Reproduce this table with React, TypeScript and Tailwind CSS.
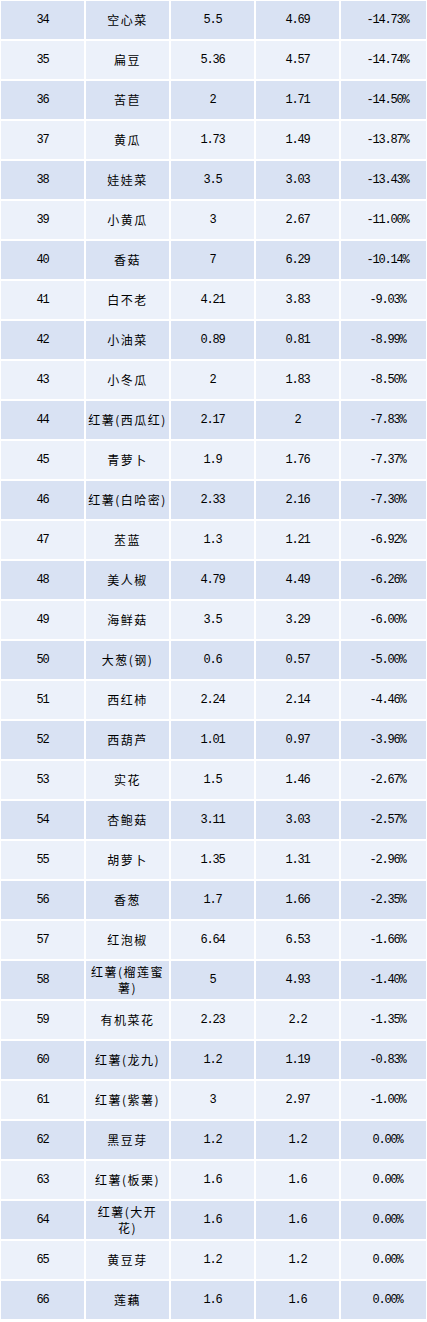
type Row = {
  no: number;
  name: React.ReactNode;
  before: string;
  after: string;
  change: string;
};

const rows: Row[] = [
  { no: 34, name: '空心菜', before: '5.5', after: '4.69', change: '-14.73%' },
  { no: 35, name: '扁豆', before: '5.36', after: '4.57', change: '-14.74%' },
  { no: 36, name: '苦苣', before: '2', after: '1.71', change: '-14.50%' },
  { no: 37, name: '黄瓜', before: '1.73', after: '1.49', change: '-13.87%' },
  { no: 38, name: '娃娃菜', before: '3.5', after: '3.03', change: '-13.43%' },
  { no: 39, name: '小黄瓜', before: '3', after: '2.67', change: '-11.00%' },
  { no: 40, name: '香菇', before: '7', after: '6.29', change: '-10.14%' },
  { no: 41, name: '白不老', before: '4.21', after: '3.83', change: '-9.03%' },
  { no: 42, name: '小油菜', before: '0.89', after: '0.81', change: '-8.99%' },
  { no: 43, name: '小冬瓜', before: '2', after: '1.83', change: '-8.50%' },
  { no: 44, name: '红薯(西瓜红)', before: '2.17', after: '2', change: '-7.83%' },
  { no: 45, name: '青萝卜', before: '1.9', after: '1.76', change: '-7.37%' },
  { no: 46, name: '红薯(白哈密)', before: '2.33', after: '2.16', change: '-7.30%' },
  { no: 47, name: '苤蓝', before: '1.3', after: '1.21', change: '-6.92%' },
  { no: 48, name: '美人椒', before: '4.79', after: '4.49', change: '-6.26%' },
  { no: 49, name: '海鲜菇', before: '3.5', after: '3.29', change: '-6.00%' },
  { no: 50, name: '大葱(钢)', before: '0.6', after: '0.57', change: '-5.00%' },
  { no: 51, name: '西红柿', before: '2.24', after: '2.14', change: '-4.46%' },
  { no: 52, name: '西葫芦', before: '1.01', after: '0.97', change: '-3.96%' },
  { no: 53, name: '实花', before: '1.5', after: '1.46', change: '-2.67%' },
  { no: 54, name: '杏鲍菇', before: '3.11', after: '3.03', change: '-2.57%' },
  { no: 55, name: '胡萝卜', before: '1.35', after: '1.31', change: '-2.96%' },
  { no: 56, name: '香葱', before: '1.7', after: '1.66', change: '-2.35%' },
  { no: 57, name: '红泡椒', before: '6.64', after: '6.53', change: '-1.66%' },
  {
    no: 58,
    name: (
      <>
        红薯(榴莲蜜
        <br />
        薯)
      </>
    ),
    before: '5',
    after: '4.93',
    change: '-1.40%',
  },
  { no: 59, name: '有机菜花', before: '2.23', after: '2.2', change: '-1.35%' },
  { no: 60, name: '红薯(龙九)', before: '1.2', after: '1.19', change: '-0.83%' },
  { no: 61, name: '红薯(紫薯)', before: '3', after: '2.97', change: '-1.00%' },
  { no: 62, name: '黑豆芽', before: '1.2', after: '1.2', change: '0.00%' },
  { no: 63, name: '红薯(板栗)', before: '1.6', after: '1.6', change: '0.00%' },
  {
    no: 64,
    name: (
      <>
        红薯(大开
        <br />
        花)
      </>
    ),
    before: '1.6',
    after: '1.6',
    change: '0.00%',
  },
  { no: 65, name: '黄豆芽', before: '1.2', after: '1.2', change: '0.00%' },
  { no: 66, name: '莲藕', before: '1.6', after: '1.6', change: '0.00%' },
];

const numCell =
  "flex items-center justify-center font-['Liberation_Mono','Noto_Sans_CJK_SC',monospace] text-[12px] tracking-[-1.2px] text-black";
const nameCell =
  "flex items-center justify-center text-center font-['Noto_Sans_CJK_SC',sans-serif] text-[12px] leading-[16px] tracking-[1.5px] text-black";

export default function App() {
  return (
    <div className="flex w-[427px] flex-col gap-[2px] bg-white pb-[3px] pl-[1px] pr-[1px] pt-[1px]">
      {rows.map((row, index) => (
        <div
          key={row.no}
          className={[
            'grid h-[38px] grid-cols-[83px_83px_83px_83px_85px] gap-x-[2px]',
            index % 2 === 0 ? '[&>div]:bg-[#d9e2f3]' : '[&>div]:bg-[#ecf1fa]',
          ].join(' ')}
        >
          <div className={numCell}>{row.no}</div>
          <div className={nameCell}>{row.name}</div>
          <div className={numCell}>{row.before}</div>
          <div className={numCell}>{row.after}</div>
          <div className={`${numCell} pl-[8px]`}>{row.change}</div>
        </div>
      ))}
    </div>
  );
}
